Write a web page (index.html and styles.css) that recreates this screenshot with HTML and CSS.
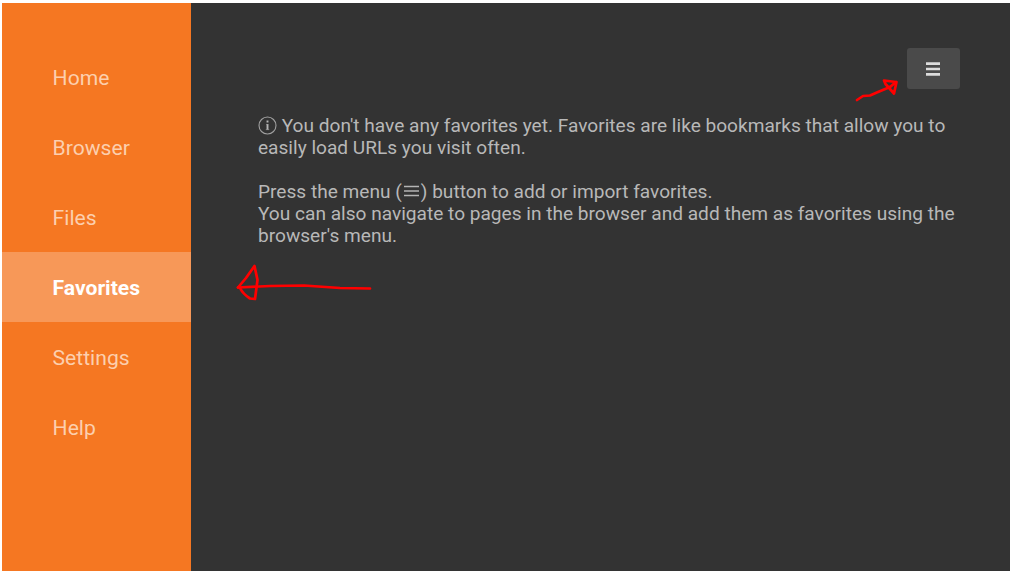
FILE: index.html
```
<!DOCTYPE html>
<html lang="en">
<head>
    <meta charset="UTF-8">
    <meta name="viewport" content="width=device-width, initial-scale=1.0">
    <title>Favorites</title>
    <link rel="stylesheet" href="styles.css">
</head>
<body>
    <div class="app">
        <nav class="sidebar">
            <a href="#">Home</a>
            <a href="#">Browser</a>
            <a href="#">Files</a>
            <a href="#" class="active">Favorites</a>
            <a href="#">Settings</a>
            <a href="#">Help</a>
        </nav>

        <main class="content">
            <button class="menu-btn" aria-label="Menu">
                <svg width="15" height="15" viewBox="0 0 15 15">
                    <path d="M0 2.7h14M0 8h14M0 13.3h14" stroke="#dcdcdc" stroke-width="2.7" />
                </svg>
            </button>

            <div class="message">
                <p>
                    <svg class="info-icon" width="19" height="19" viewBox="0 0 19 19">
                        <circle cx="9.5" cy="9.5" r="8.5" fill="none" stroke="#a0a0a0" stroke-width="1.1" />
                        <path d="M9.5 4.5v2M9.5 8v6" stroke="#b4b4b4" stroke-width="1.9" />
                        <path d="M8 8.4h1.5M7.8 13.6h3.4" stroke="#909090" stroke-width="0.8" />
                    </svg>
                    You don't have any favorites yet. Favorites are like bookmarks that allow you to<br>
                    easily load URLs you visit often.
                </p>
                <p>
                    Press the menu (<svg class="bars-icon" width="19" height="12" viewBox="0 0 19 12"><path d="M2 1.5h15M2 6h15M2 10.5h15" stroke="#b4b4b4" stroke-width="1.3" /></svg>) button to add or import favorites.<br>
                    You can also navigate to pages in the browser and add them as favorites using the<br>
                    browser's menu.
                </p>
            </div>
        </main>

        <!-- Hand drawn arrows -->
        <svg class="marks" width="1008" height="568" viewBox="2 3 1008 568">
            <path d="M857 100L863 96L870 95.5L878 92L890 87" />
            <path d="M890 87L896 82L884 80.5L885.5 84L894 93.5L896.5 82" />
            <path d="M370 288.5L340 288L304 285.5L270 286L238 287.5" />
            <path d="M238 287.5L246 278L254.5 266L257.5 280L255 299L250 298.5Q243 294 240 288" />
        </svg>
    </div>
</body>
</html>
```
FILE: styles.css
```
* {
    padding: 0;
    margin: 0;
    box-sizing: border-box;
}
body {
    background-color: #fff;
    font-family: Roboto, sans-serif;
    padding: 3px 2px 0;
    overflow: hidden;
}
.app {
    position: relative;
    display: flex;
    height: 568px;
    background-color: #333;
}

/* SIDEBAR */
.sidebar {
    width: 189px;
    padding-top: 39px;
    background-color: #f57722;
}
.sidebar a {
    display: block;
    height: 70px;
    padding-left: 50.6px;
    line-height: 72px;
    font-size: 21.1px;
    color: #fccfae;
    text-decoration: none;
}
.sidebar a.active {
    background-color: #f79858;
    color: #fff;
    font-weight: 700;
}

/* CONTENT */
.content {
    flex: 1;
    display: flex;
    flex-direction: column;
    padding: 45px 50px 0 67px;
}
.menu-btn {
    align-self: flex-end;
    display: flex;
    align-items: center;
    justify-content: center;
    width: 53px;
    height: 41px;
    border: none;
    border-radius: 3px;
    background-color: #4a4a4a;
}
.message {
    margin-top: 26px;
    font-size: 19.1px;
    line-height: 22px;
    color: #b8b8b8;
    white-space: nowrap;
}
.message p + p {
    margin-top: 22px;
}
.info-icon {
    vertical-align: -3px;
}
.bars-icon {
    vertical-align: 1px;
}

.marks {
    position: absolute;
    top: 0;
    left: 0;
    fill: none;
    stroke: #f00;
    stroke-width: 2.7;
    stroke-linecap: round;
    stroke-linejoin: round;
}
```
